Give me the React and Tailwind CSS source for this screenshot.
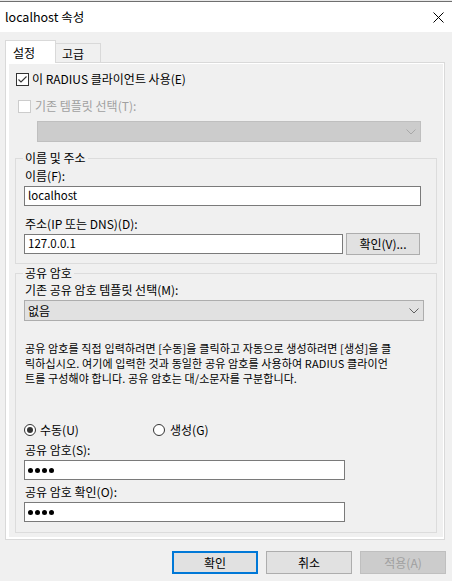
import React from "react";

function Chevron({ color = "#606060" }) {
  return (
    <svg width="10" height="6" viewBox="0 0 10 6" fill="none">
      <path d="M0.5 0.5 L5 5 L9.5 0.5" stroke={color} strokeWidth="1" />
    </svg>
  );
}

function Dots() {
  return (
    <div className="flex items-center gap-[2px] pl-[3px]">
      <span className="w-[5px] h-[5px] rounded-full bg-black" />
      <span className="w-[5px] h-[5px] rounded-full bg-black" />
      <span className="w-[5px] h-[5px] rounded-full bg-black" />
      <span className="w-[5px] h-[5px] rounded-full bg-black" />
    </div>
  );
}

function Group({ label, children, className = "" }) {
  return (
    <div className={"ml-[6px] w-[422px] border border-[#dcdcdc] " + className}>
      <div className="-mt-[9px] ml-[7px] w-fit px-[2px] bg-[#f0f0f0] leading-[16px] h-[16px]">{label}</div>
      {children}
    </div>
  );
}

export default function App() {
  return (
    <div className="w-[452px] h-[581px] bg-[#f0f0f0] text-[12px] text-black font-['Noto_Sans_CJK_KR',sans-serif] overflow-hidden">
      <div className="h-px bg-[#e9e9e9]" />
      <div className="h-px bg-[#6f6f6f]" />
      <div className="h-[30px] bg-white flex items-center justify-between pl-[5px] pr-[8px]">
        <span className="text-[12.5px]">localhost 속성</span>
        <svg width="11" height="11" viewBox="0 0 11 11" fill="none">
          <path d="M0.5 0.5 L10.5 10.5 M10.5 0.5 L0.5 10.5" stroke="#000" strokeWidth="1" />
        </svg>
      </div>
      <div className="px-[5px] pt-[8px]">
        <div className="flex items-end h-[22px]">
          <div className="relative z-10 -mb-px h-[23px] w-[51px] bg-white border-t border-l border-r border-[#d9d9d9] flex items-center pl-[7px] pt-[1px]">설정</div>
          <div className="h-[19px] w-[45px] bg-[#f0f0f0] border-t border-r border-[#d9d9d9] flex items-center pl-[6px] pt-[1px]">고급</div>
        </div>
        <div className="w-[440px] h-[478px] border border-[#d9d9d9] bg-white pt-px pr-px pb-[2px] pl-[3px] flex flex-col">
          <div className="flex-1 bg-[#f0f0f0] flex flex-col">
            <div className="mt-[7px] ml-[7px] h-[16px] flex items-center gap-[3px]">
              <svg width="13" height="13" viewBox="0 0 13 13" fill="none">
                <rect x="0.5" y="0.5" width="12" height="12" fill="#fff" stroke="#333" />
                <path d="M2.5 6.5 L5 9 L10.5 3.5" stroke="#333" strokeWidth="1.1" />
              </svg>
              <span>이 RADIUS 클라이언트 사용(E)</span>
            </div>
            <div className="mt-[11px] ml-[9px] h-[16px] flex items-center gap-[4px] text-[#a0a0a0]">
              <span className="w-[13px] h-[13px] bg-white border border-[#cccccc]" />
              <span>기존 템플릿 선택(T):</span>
            </div>
            <div className="mt-[7px] ml-[28px] w-[384px] h-[21px] bg-[#cccccc] border border-[#bfbfbf] flex items-center justify-end pr-[4px]">
              <Chevron color="#a8a8a8" />
            </div>

            <Group label="이름 및 주소" className="mt-[16px] pb-[8px]">
              <div className="mt-[2px] ml-[9px] leading-[16px]">이름(F):</div>
              <div className="mt-[2px] ml-[8px] w-[397px] h-[20px] bg-white border border-[#7a7a7a] flex items-center pl-[3px] text-[11.5px]">localhost</div>
              <div className="mt-[10px] ml-[9px] leading-[16px]">주소(IP 또는 DNS)(D):</div>
              <div className="mt-[1px] ml-[8px] h-[22px] flex items-center gap-[3px]">
                <div className="w-[319px] h-[20px] bg-white border border-[#7a7a7a] flex items-center pl-[3px] text-[11.5px]">127.0.0.1</div>
                <div className="w-[74px] h-[22px] bg-[#e1e1e1] border border-[#adadad] flex items-center justify-center">확인(V)...</div>
              </div>
            </Group>

            <Group label="공유 암호" className="mt-[9px] pb-[10px]">
              <div className="mt-[1px] ml-[9px] leading-[16px]">기존 공유 암호 템플릿 선택(M):</div>
              <div className="mt-[2px] ml-[8px] w-[400px] h-[21px] bg-[#e1e1e1] border border-[#adadad] flex items-center justify-between pl-[3px] pr-[4px]">
                <span>없음</span>
                <Chevron />
              </div>
              <div className="mt-[20px] ml-[9px] leading-[15px] whitespace-nowrap text-[11px] tracking-[0.12px]">
                <div>공유 암호를 직접 입력하려면 [수동]을 클릭하고 자동으로 생성하려면 [생성]을 클</div>
                <div>릭하십시오. 여기에 입력한 것과 동일한 공유 암호를 사용하여 RADIUS 클라이언</div>
                <div>트를 구성해야 합니다. 공유 암호는 대/소문자를 구분합니다.</div>
              </div>
              <div className="mt-[36px] ml-[8px] h-[16px] flex items-center">
                <div className="w-[129px] flex items-center gap-[4px]">
                  <svg width="12" height="12" viewBox="0 0 12 12" fill="none">
                    <circle cx="6" cy="6" r="5.5" fill="#fff" stroke="#333" />
                    <circle cx="6" cy="6" r="3" fill="#333" />
                  </svg>
                  <span>수동(U)</span>
                </div>
                <div className="flex items-center gap-[5px]">
                  <svg width="12" height="12" viewBox="0 0 12 12" fill="none">
                    <circle cx="6" cy="6" r="5.5" fill="#fff" stroke="#333" />
                  </svg>
                  <span>생성(G)</span>
                </div>
              </div>
              <div className="mt-[4px] ml-[9px] leading-[16px]">공유 암호(S):</div>
              <div className="mt-[2px] ml-[8px] w-[321px] h-[20px] bg-white border border-[#7a7a7a] flex items-center">
                <Dots />
              </div>
              <div className="mt-[4px] ml-[9px] leading-[16px]">공유 암호 확인(O):</div>
              <div className="mt-[2px] ml-[8px] w-[321px] h-[20px] bg-white border border-[#7a7a7a] flex items-center">
                <Dots />
              </div>
            </Group>
          </div>
        </div>
        <div className="mt-[11px] flex justify-end gap-[8px] pr-px">
          <div className="w-[86px] h-[23px] bg-[#e1e1e1] border-2 border-[#0078d7] flex items-center justify-center">확인</div>
          <div className="w-[86px] h-[23px] bg-[#e1e1e1] border border-[#adadad] flex items-center justify-center">취소</div>
          <div className="w-[86px] h-[23px] bg-[#cccccc] border border-[#bfbfbf] text-[#a0a0a0] flex items-center justify-center">적용(A)</div>
        </div>
      </div>
    </div>
  );
}
